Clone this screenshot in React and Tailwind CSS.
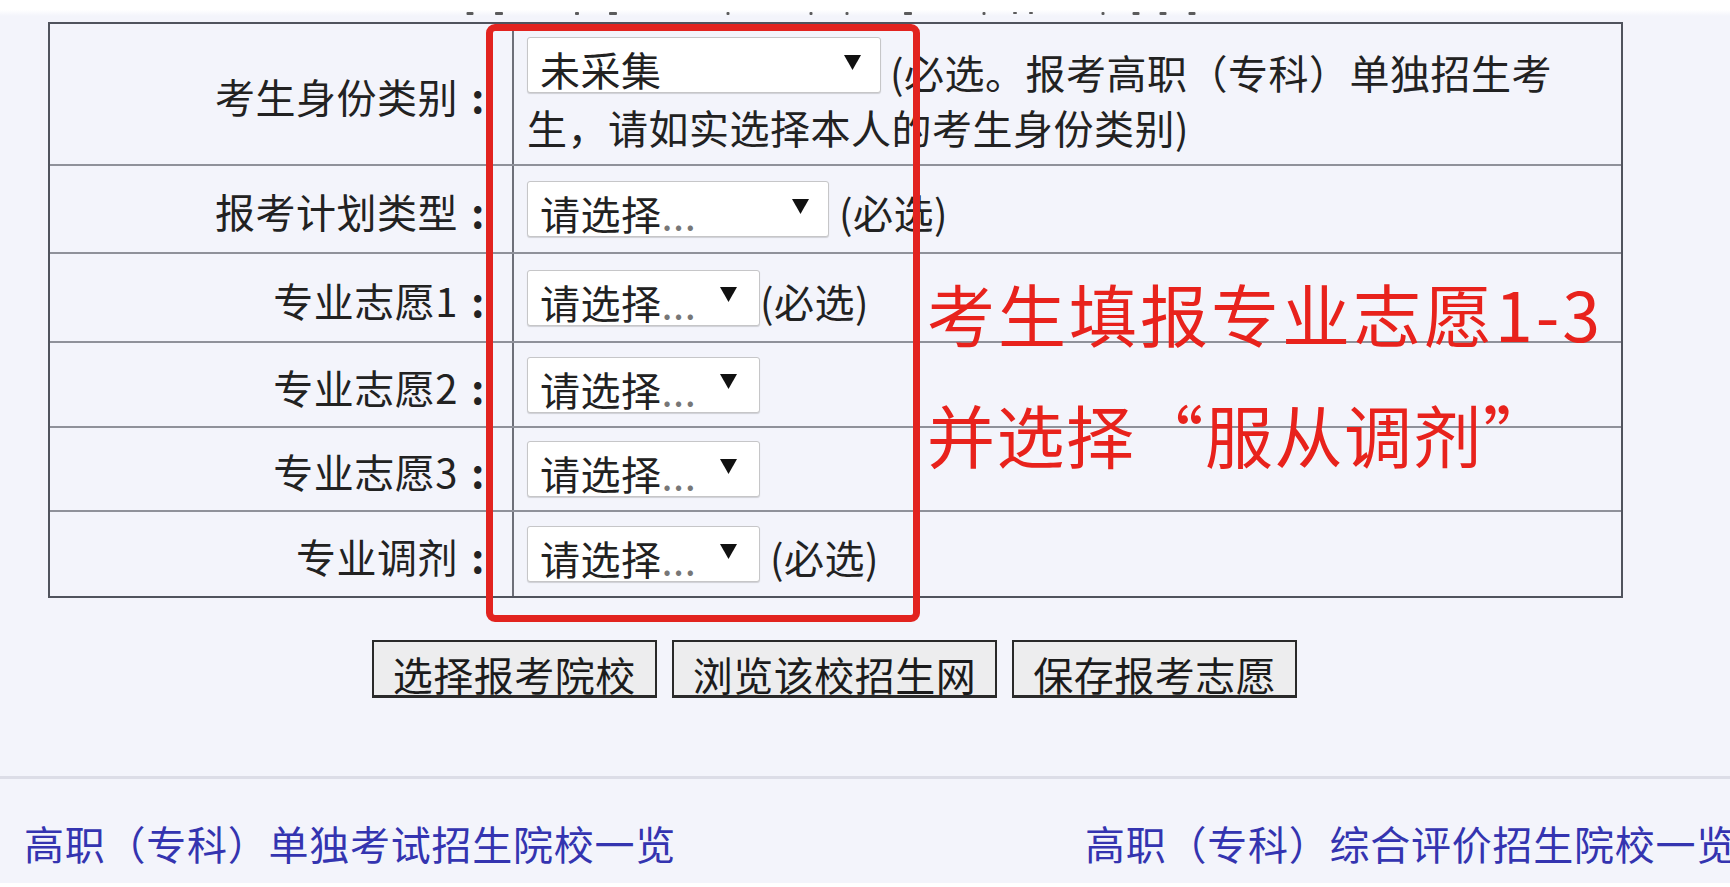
import React from "react";

function Arrow() {
  return (
    <svg width="17" height="15" viewBox="0 0 17 15" className="shrink-0">
      <polygon points="0,0 17,0 8.5,15" fill="#111" />
    </svg>
  );
}

function Sel({ wClass, prClass, text, placeholder }) {
  return (
    <div
      className={`flex h-[56px] shrink-0 items-center justify-between rounded-[3px] border-[1.5px] border-[#c6c6c8] bg-white pl-[12px] shadow-[0_1px_1px_rgba(0,0,0,0.15)] ${wClass} ${prClass}`}
    >
      <span className="mt-[8px] whitespace-nowrap text-[40px] leading-none tracking-[0.5px] text-[#222]">
        {text}
        {placeholder && <span className="text-[#777]">...</span>}
      </span>
      <span className="-mt-[6px]">
        <Arrow />
      </span>
    </div>
  );
}

function Label({ children }) {
  return (
    <div className="flex w-[462px] shrink-0 items-center justify-end pr-[14px]">
      <span className="mt-[4px] flex items-baseline whitespace-nowrap text-[40px] leading-none tracking-[0.5px] text-[#222]">
        {children}
        <span className="inline-block w-[40px] text-center font-bold">:</span>
      </span>
    </div>
  );
}

function Req({ mlClass }) {
  return (
    <span className={`mt-[6px] whitespace-nowrap text-[40px] leading-none tracking-[0.5px] text-[#222] ${mlClass}`}>
      (必选)
    </span>
  );
}

export default function App() {
  const dots = [
    [470, 7, 3],
    [499, 8, 3],
    [577, 4, 3],
    [613, 8, 3],
    [728, 3, 3],
    [811, 3, 3],
    [847, 3, 3],
    [908, 8, 3],
    [984, 3, 3],
    [1015, 4, 2],
    [1031, 4, 2],
    [1103, 3, 3],
    [1136, 7, 3],
    [1163, 7, 3],
    [1192, 7, 3],
  ];
  return (
    <div className="relative h-[887px] w-[1730px] overflow-hidden bg-[#f3f4fb] font-['Noto_Sans_CJK_SC','Noto_Sans',sans-serif]">
      {/* top strip with cut-off text remnants */}
      <div className="h-[16px] bg-gradient-to-b from-white from-60% to-[#f3f4fb]">
        <svg width="1730" height="16" viewBox="0 0 1730 16">
          {dots.map(([x, w, h], i) => (
            <rect key={i} x={x - w / 2} y={12} width={w} height={h} rx="1" fill="#333" opacity="0.8" />
          ))}
        </svg>
      </div>

      {/* form table */}
      <div className="ml-[48px] mt-[6px] w-[1575px] border-2 border-[#50535d]">
        {/* row 1 */}
        <div className="flex h-[140px]">
          <Label>考生身份类别</Label>
          <div className="flex-1 border-l-2 border-[#6e7079] pl-[13px] pt-[13px]">
            <div className="flex items-start">
              <Sel wClass="w-[354px]" prClass="pr-[19px]" text="未采集" />
              <span className="ml-[9px] mt-[15px] whitespace-nowrap text-[40px] leading-none tracking-[0.5px] text-[#222]">
                (必选。报考高职（专科）单独招生考
              </span>
            </div>
            <div className="mt-[14px] whitespace-nowrap text-[40px] leading-none tracking-[0.5px] text-[#222]">
              生，请如实选择本人的考生身份类别)
            </div>
          </div>
        </div>
        {/* row 2 */}
        <div className="flex h-[88px] border-t-2 border-[#8f919a]">
          <Label>报考计划类型</Label>
          <div className="flex flex-1 items-center border-l-2 border-[#6e7079] pl-[13px]">
            <Sel wClass="w-[302px]" prClass="pr-[19px]" text="请选择" placeholder />
            <Req mlClass="ml-[10px]" />
          </div>
        </div>
        {/* row 3 */}
        <div className="flex h-[89px] border-t-2 border-[#8f919a]">
          <Label>专业志愿1</Label>
          <div className="flex flex-1 items-center border-l-2 border-[#6e7079] pl-[13px]">
            <Sel wClass="w-[233px]" prClass="pr-[22px]" text="请选择" placeholder />
            <Req mlClass="ml-0" />
          </div>
        </div>
        {/* row 4 */}
        <div className="flex h-[85px] border-t-2 border-[#8f919a]">
          <Label>专业志愿2</Label>
          <div className="flex flex-1 items-center border-l-2 border-[#6e7079] pl-[13px]">
            <Sel wClass="w-[233px]" prClass="pr-[22px]" text="请选择" placeholder />
          </div>
        </div>
        {/* row 5 */}
        <div className="flex h-[84px] border-t-2 border-[#8f919a]">
          <Label>专业志愿3</Label>
          <div className="flex flex-1 items-center border-l-2 border-[#6e7079] pl-[13px]">
            <Sel wClass="w-[233px]" prClass="pr-[22px]" text="请选择" placeholder />
          </div>
        </div>
        {/* row 6 */}
        <div className="flex h-[86px] border-t-2 border-[#8f919a]">
          <Label>专业调剂</Label>
          <div className="flex flex-1 items-center border-l-2 border-[#6e7079] pl-[13px]">
            <Sel wClass="w-[233px]" prClass="pr-[22px]" text="请选择" placeholder />
            <Req mlClass="ml-[10px]" />
          </div>
        </div>
      </div>

      {/* buttons */}
      <div className="ml-[48px] mt-[42px] flex w-[1575px] justify-center gap-[15px] pr-[2px]">
        {["选择报考院校", "浏览该校招生网", "保存报考志愿"].map((t) => (
          <div
            key={t}
            className="h-[58px] overflow-hidden border-2 border-b-[3px] border-[#2a2a2a] bg-[#ededee] px-[19px] pt-[12px]"
          >
            <span className="block whitespace-nowrap text-[40px] leading-none tracking-[0.5px] text-[#1c1c1c]">{t}</span>
          </div>
        ))}
      </div>

      {/* divider */}
      <div className="mt-[78px] h-[3px] bg-[#dcdde7]" />

      {/* footer links */}
      <div className="mt-[44px] flex whitespace-nowrap text-[40px] leading-none tracking-[0.75px] text-[#3434b0]">
        <span className="ml-[24px]">高职（专科）单独考试招生院校一览</span>
        <span className="ml-[409px]">高职（专科）综合评价招生院校一览</span>
      </div>
      <div className="absolute bottom-0 left-0 h-[4px] w-full bg-white" />

      {/* red annotation frame */}
      <div className="pointer-events-none absolute left-[486px] top-[24px] h-[598px] w-[434px] rounded-[9px] border-[7px] border-[#e2231f]" />
      <div className="pointer-events-none absolute left-[927px] top-[279px] whitespace-nowrap text-[68px] leading-none tracking-[3px] text-[#e8221c]">
        考生填报专业志愿1-3
      </div>
      <div className="pointer-events-none absolute left-[927px] top-[400px] whitespace-nowrap text-[68px] leading-none tracking-[1.5px] text-[#e8221c]">
        并选择“服从调剂”
      </div>
    </div>
  );
}
